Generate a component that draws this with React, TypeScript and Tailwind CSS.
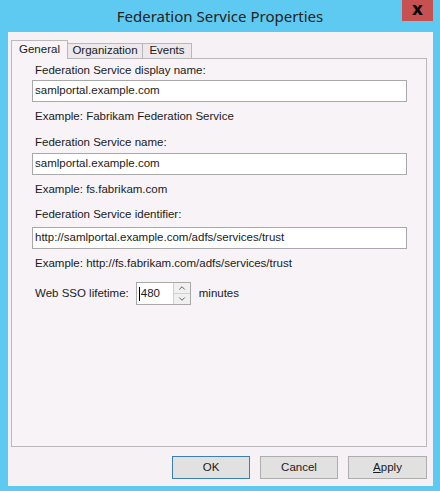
import { ChevronUp, ChevronDown } from "lucide-react";

const font = { fontFamily: '"Liberation Sans", Arial, sans-serif' };

function Field({ label, value, example, gapTop, gapInput }: { label: string; value: string; example: string; gapTop: string; gapInput: string }) {
  return (
    <div className={gapTop}>
      <div className="h-[14px] leading-[14px] pl-[3px]">{label}</div>
      <div className={`${gapInput} h-[22px] w-[375px] border border-[#a9a9a9] bg-white flex items-center pl-[2px]`}>
        {value}
      </div>
      <div className="mt-[7px] h-[14px] leading-[14px] pl-[3px]">{example}</div>
    </div>
  );
}

export default function App() {
  return (
    <div
      className="w-[440px] h-[491px] bg-[#5fcaf1] flex flex-col text-[11.5px] text-[#1a1a1a]"
      style={font}
    >
      {/* title bar */}
      <div className="relative h-[32px] flex items-center justify-center">
        <span
          className="text-[15px] text-[#222] pt-[1px]"
          style={{ fontFamily: '"Noto Sans", "Open Sans", sans-serif' }}
        >
          Federation Service Properties
        </span>
        <div className="absolute top-0 right-[7px] w-[31px] h-[21px] bg-[#c75050] flex items-center justify-center">
          <span className="text-[17px] font-bold text-black leading-none pb-[2px]" style={{ fontFamily: '"DejaVu Sans", sans-serif' }}>
            x
          </span>
        </div>
      </div>

      {/* body */}
      <div className="flex-1 ml-[8px] mr-[7px] mb-[5px] bg-[#f5f1f5] flex flex-col pl-[3px] pr-[6px] pt-[8px]">
        {/* tabs */}
        <div className="flex items-end h-[18px] relative z-10">
          <div className="h-[19px] w-[57px] border border-b-0 border-[#b9b9b9] bg-[#f7f3f7] flex items-center justify-center mb-[-1px]">
            General
          </div>
          <div className="h-[15px] w-[75px] border border-b-0 border-l-0 border-[#b9b9b9] bg-[#ece8ec] flex items-center justify-center">
            Organization
          </div>
          <div className="h-[15px] w-[49px] border border-b-0 border-l-0 border-[#b9b9b9] bg-[#ece8ec] flex items-center justify-center">
            Events
          </div>
        </div>

        {/* panel */}
        <div className="h-[389px] border border-[#b9b9b9] bg-[#f7f3f7] pl-[20px] pt-[4px]">
          <Field
            label="Federation Service display name:"
            value="samlportal.example.com"
            example="Example: Fabrikam Federation Service"
            gapTop="mt-0"
            gapInput="mt-[3px]"
          />
          <Field
            label="Federation Service name:"
            value="samlportal.example.com"
            example="Example: fs.fabrikam.com"
            gapTop="mt-[12px]"
            gapInput="mt-[4px]"
          />
          <Field
            label="Federation Service identifier:"
            value="http://samlportal.example.com/adfs/services/trust"
            example="Example: http://fs.fabrikam.com/adfs/services/trust"
            gapTop="mt-[11px]"
            gapInput="mt-[6px]"
          />

          <div className="mt-[12px] flex items-center h-[23px] pl-[3px]">
            <span>Web SSO lifetime:</span>
            <div className="ml-[7px] h-[23px] w-[55px] border border-[#a9a9a9] bg-white flex">
              <div className="flex-1 flex items-center pl-[2px]">
                <span className="w-[1px] h-[14px] bg-black mr-[1px]" />
                480
              </div>
              <div className="w-[17px] flex flex-col border-l border-[#d0d0d0] bg-[#f0f0f0]">
                <div className="flex-1 flex items-center justify-center border-b border-[#d0d0d0]">
                  <ChevronUp size={10} strokeWidth={2} className="text-[#444]" />
                </div>
                <div className="flex-1 flex items-center justify-center">
                  <ChevronDown size={10} strokeWidth={2} className="text-[#444]" />
                </div>
              </div>
            </div>
            <span className="ml-[8px]">minutes</span>
          </div>
        </div>

        {/* buttons */}
        <div className="flex justify-end gap-[10px] mt-[9px]">
          <button className="h-[23px] w-[78px] border border-[#3c7fb1] bg-[#e1e1e1] text-[11.5px]">
            OK
          </button>
          <button className="h-[23px] w-[78px] border border-[#adadad] bg-[#e1e1e1] text-[11.5px]">
            Cancel
          </button>
          <button className="h-[23px] w-[79px] border border-[#adadad] bg-[#e1e1e1] text-[11.5px]">
            <span className="underline">A</span>pply
          </button>
        </div>
      </div>
    </div>
  );
}
